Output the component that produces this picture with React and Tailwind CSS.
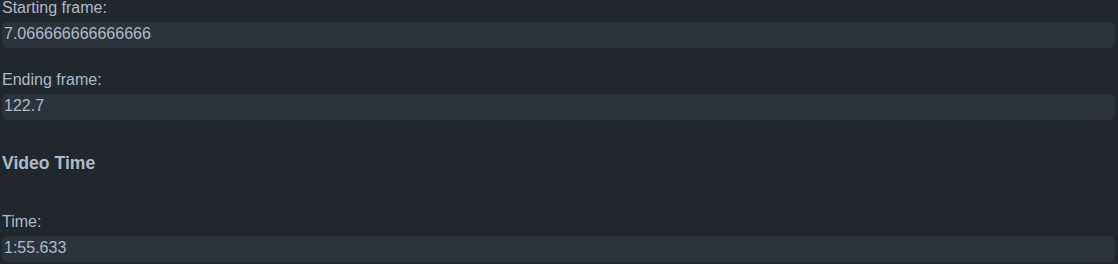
export default function App() {
  const font = { fontFamily: '"Liberation Sans", Arial, sans-serif' };
  const Label = ({ children, className = "" }) => (
    <div className={"text-[16px] leading-[16px] text-[#adbac7] " + className}>{children}</div>
  );
  const Box = ({ children, className = "" }) => (
    <div className={"h-[26px] rounded-[6px] bg-[#2d333b] px-[2px] text-[16px] leading-[24px] text-[#adbac7] " + className}>
      {children}
    </div>
  );
  return (
    <div className="min-h-[264px] w-full bg-[#22272e] pl-[2px] pr-[3px]" style={font}>
      <div className="flex flex-col">
        <Label>Starting frame:</Label>
        <Box className="mt-[6px]">7.066666666666666</Box>
        <Label className="mt-[24px]">Ending frame:</Label>
        <Box className="mt-[6px]">122.7</Box>
        <div className="mt-[33px] text-[17.6px] font-bold leading-[20px] text-[#adbac7]">Video Time</div>
        <Label className="mt-[41px]">Time:</Label>
        <Box className="mt-[6px]">1:55.633</Box>
      </div>
    </div>
  );
}
